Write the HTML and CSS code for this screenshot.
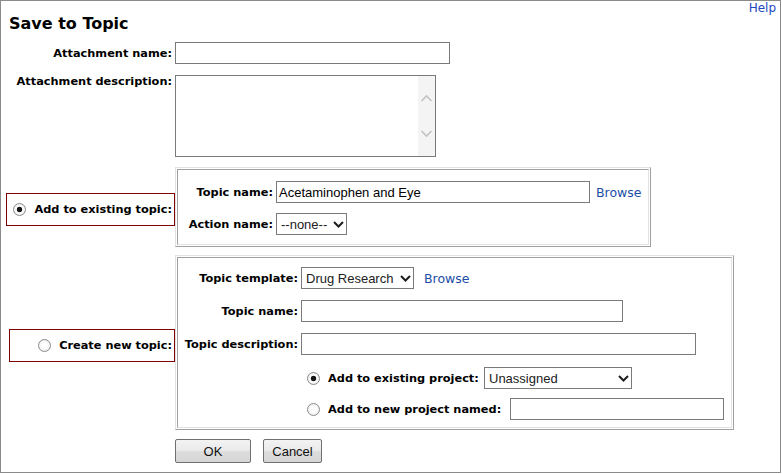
FILE: index.html
```html
<!DOCTYPE html>
<html lang="en">
<head>
    <meta charset="UTF-8">
    <title>Save to Topic</title>
    <link rel="stylesheet" href="styles.css">
</head>
<body>

<div class="dialog">
    <div class="topbar">
        <h1 class="title">Save to Topic</h1>
        <a class="help" href="#">Help</a>
    </div>

    <div class="row row-name">
        <label class="cap">Attachment name:</label>
        <input class="field w-attach" type="text">
    </div>

    <div class="row row-desc">
        <label class="cap">Attachment description:</label>
        <div class="memo">
            <textarea></textarea>
            <div class="scroll">
                <svg width="17" height="8" viewBox="0 0 17 8"><polyline points="3.5,7 8.5,2 13.5,7" /></svg>
                <svg width="17" height="8" viewBox="0 0 17 8"><polyline points="3.5,1 8.5,6 13.5,1" /></svg>
            </div>
        </div>
    </div>

    <div class="row row-existing">
        <div class="side">
            <label class="choice choice-existing"><input class="radio" type="radio" name="mode" checked>Add to existing topic:</label>
        </div>
        <div class="panel panel-existing">
            <div class="panel-in">
                <div class="prow prow-first">
                    <span class="plabel">Topic name:</span>
                    <input class="field w-topic" type="text" value="Acetaminophen and Eye">
                    <a class="browse b-topic" href="#">Browse</a>
                </div>
                <div class="prow prow-next">
                    <span class="plabel">Action name:</span>
                    <div class="select w-action">
                        <span>--none--</span>
                        <svg width="11" height="7" viewBox="0 0 11 7"><polyline points="1,1 5.5,5.5 10,1" /></svg>
                    </div>
                </div>
            </div>
        </div>
    </div>

    <div class="row row-create">
        <div class="side">
            <label class="choice choice-create"><input class="radio" type="radio" name="mode">Create new topic:</label>
        </div>
        <div class="panel panel-create">
            <div class="panel-in">
                <div class="prow prow-template">
                    <span class="plabel wide">Topic template:</span>
                    <div class="select w-template">
                        <span>Drug Research</span>
                        <svg width="11" height="7" viewBox="0 0 11 7"><polyline points="1,1 5.5,5.5 10,1" /></svg>
                    </div>
                    <a class="browse b-template" href="#">Browse</a>
                </div>
                <div class="prow prow-gap">
                    <span class="plabel wide">Topic name:</span>
                    <input class="field w-newname" type="text">
                </div>
                <div class="prow prow-gap">
                    <span class="plabel wide">Topic description:</span>
                    <input class="field w-newdesc" type="text">
                </div>
                <div class="prow proj proj-existing">
                    <label class="opt opt-existing"><input class="radio" type="radio" name="proj" checked>Add to existing project:</label>
                    <div class="select w-project">
                        <span>Unassigned</span>
                        <svg width="11" height="7" viewBox="0 0 11 7"><polyline points="1,1 5.5,5.5 10,1" /></svg>
                    </div>
                </div>
                <div class="prow proj proj-new">
                    <label class="opt opt-new"><input class="radio" type="radio" name="proj">Add to new project named:</label>
                    <input class="field w-newproj" type="text">
                </div>
            </div>
        </div>
    </div>

    <div class="row row-buttons">
        <button class="btn btn-ok">OK</button>
        <button class="btn btn-cancel">Cancel</button>
    </div>
</div>

</body>
</html>
```

FILE: styles.css
```css
body {
    margin: 0;
    font-family: "DejaVu Sans", Verdana, sans-serif;
    color: #000;
    background: #fff;
}
.dialog {
    width: 781px;
    height: 473px;
    box-sizing: border-box;
    border: 1px solid #8a8a8a;
}
.topbar {
    display: flex;
    justify-content: space-between;
    align-items: flex-start;
    height: 32px;
    padding: 0 4px 0 8px;
}
.title {
    margin: 13px 0 0;
    font-size: 16px;
    line-height: 19px;
    font-weight: bold;
}
.help {
    font-size: 12px;
    line-height: 14px;
    color: #2347c2;
    text-decoration: none;
}
.row {
    display: flex;
    align-items: flex-start;
}
.cap,
.plabel,
.choice,
.opt {
    font-size: 11.33px;
    font-weight: bold;
    line-height: 13px;
}
.cap {
    width: 174px;
    flex: none;
    box-sizing: border-box;
    padding-right: 3px;
    text-align: right;
}
.row-name {
    margin-top: 9px;
    align-items: center;
}
.row-desc {
    margin-top: 11px;
}
.row-existing {
    margin-top: 10px;
}
.row-create {
    margin-top: 8px;
}
.row-buttons {
    margin-top: 9px;
    padding-left: 174px;
}

/* inputs */
.field {
    height: 22px;
    margin: 0;
    box-sizing: border-box;
    border: 1px solid #7a7a7a;
    padding: 0 2px;
    font: 13px "Liberation Sans", Arial, sans-serif;
    color: #000;
    background: #fff;
    outline: none;
}
.w-attach { width: 275px; }
.w-topic { width: 314px; }
.w-newname { width: 322px; }
.w-newdesc { width: 395px; }
.w-newproj { width: 214px; }

.memo {
    display: flex;
    width: 261px;
    height: 82px;
    box-sizing: border-box;
    border: 1px solid #7a7a7a;
}
.memo textarea {
    flex: 1;
    margin: 0;
    border: 0;
    padding: 2px;
    resize: none;
    outline: none;
    font: 13px "Liberation Sans", Arial, sans-serif;
}
.scroll {
    width: 17px;
    flex: none;
    box-sizing: border-box;
    padding: 18px 0;
    display: flex;
    flex-direction: column;
    justify-content: space-between;
    background: #f4f4f4;
}
.scroll svg polyline {
    fill: none;
    stroke: #c3c3c3;
    stroke-width: 1.7;
}

.select {
    display: flex;
    align-items: center;
    justify-content: space-between;
    height: 22px;
    box-sizing: border-box;
    border: 1px solid #7a7a7a;
    padding: 0 2px 0 4px;
    font: 13px "Liberation Sans", Arial, sans-serif;
    color: #222;
    background: #fff;
}
.select svg polyline {
    fill: none;
    stroke: #1e1e1e;
    stroke-width: 2;
}
.w-action { width: 71px; }
.w-template { width: 113px; }
.w-project { width: 148px; }

.radio {
    -webkit-appearance: none;
    appearance: none;
    flex: none;
    width: 13px;
    height: 13px;
    margin: 0;
    box-sizing: border-box;
    border: 1px solid #8b8b8b;
    border-radius: 50%;
    background: radial-gradient(circle, #ffffff 30%, #e4e4e4 100%);
}
.radio:checked {
    background: radial-gradient(circle, #161616 0, #161616 2.4px, transparent 3.1px),
                radial-gradient(circle, #ffffff 30%, #e4e4e4 100%);
}

/* left side choices */
.side {
    width: 174px;
    flex: none;
}
.choice {
    display: flex;
    align-items: center;
    justify-content: flex-end;
    gap: 8px;
    height: 33px;
    box-sizing: border-box;
    border: 1px solid #800000;
    padding-right: 2px;
}
.choice-existing {
    width: 169px;
    margin: 26px 0 0 5px;
}
.choice-create {
    width: 166px;
    margin: 74px 0 0 8px;
}

/* panels */
.panel {
    box-sizing: border-box;
    border: 1px solid;
    border-color: #e2e2e2 #a0a0a0 #a0a0a0 #e2e2e2;
    padding: 1px;
}
.panel-in {
    height: 100%;
    box-sizing: border-box;
    border: 1px solid;
    border-color: #a0a0a0 #e2e2e2 #e2e2e2 #a0a0a0;
}
.panel-existing {
    width: 476px;
    height: 80px;
}
.panel-create {
    width: 559px;
    height: 175px;
}
.prow {
    display: flex;
    align-items: center;
}
.plabel {
    width: 98px;
    flex: none;
    box-sizing: border-box;
    padding-right: 3px;
    text-align: right;
}
.plabel.wide {
    width: 123px;
}
.panel-existing .prow-first { margin-top: 11px; }
.panel-existing .prow-next { margin-top: 10px; }
.prow-template { margin-top: 9px; }
.prow-gap { margin-top: 11px; }
.proj {
    padding-left: 129px;
}
.proj-existing { margin-top: 12px; }
.proj-new { margin-top: 9px; }
.opt {
    display: flex;
    align-items: center;
    gap: 8px;
    flex: none;
}
.opt-existing { width: 177px; }
.opt-new { width: 203px; }

.browse {
    font-size: 12.5px;
    color: #1c4ca6;
    text-decoration: none;
}
.b-topic { margin-left: 6px; }
.b-template { margin-left: 10px; }

.btn {
    height: 24px;
    margin: 0;
    padding: 0;
    box-sizing: border-box;
    border: 1px solid #707070;
    border-radius: 2px;
    background: linear-gradient(#f3f3f3, #e9e9e9 50%, #dddddd 51%, #d6d6d6);
    font: 13px "Liberation Sans", Arial, sans-serif;
    color: #111;
}
.btn-ok { width: 76px; }
.btn-cancel {
    width: 59px;
    margin-left: 12px;
}
```
